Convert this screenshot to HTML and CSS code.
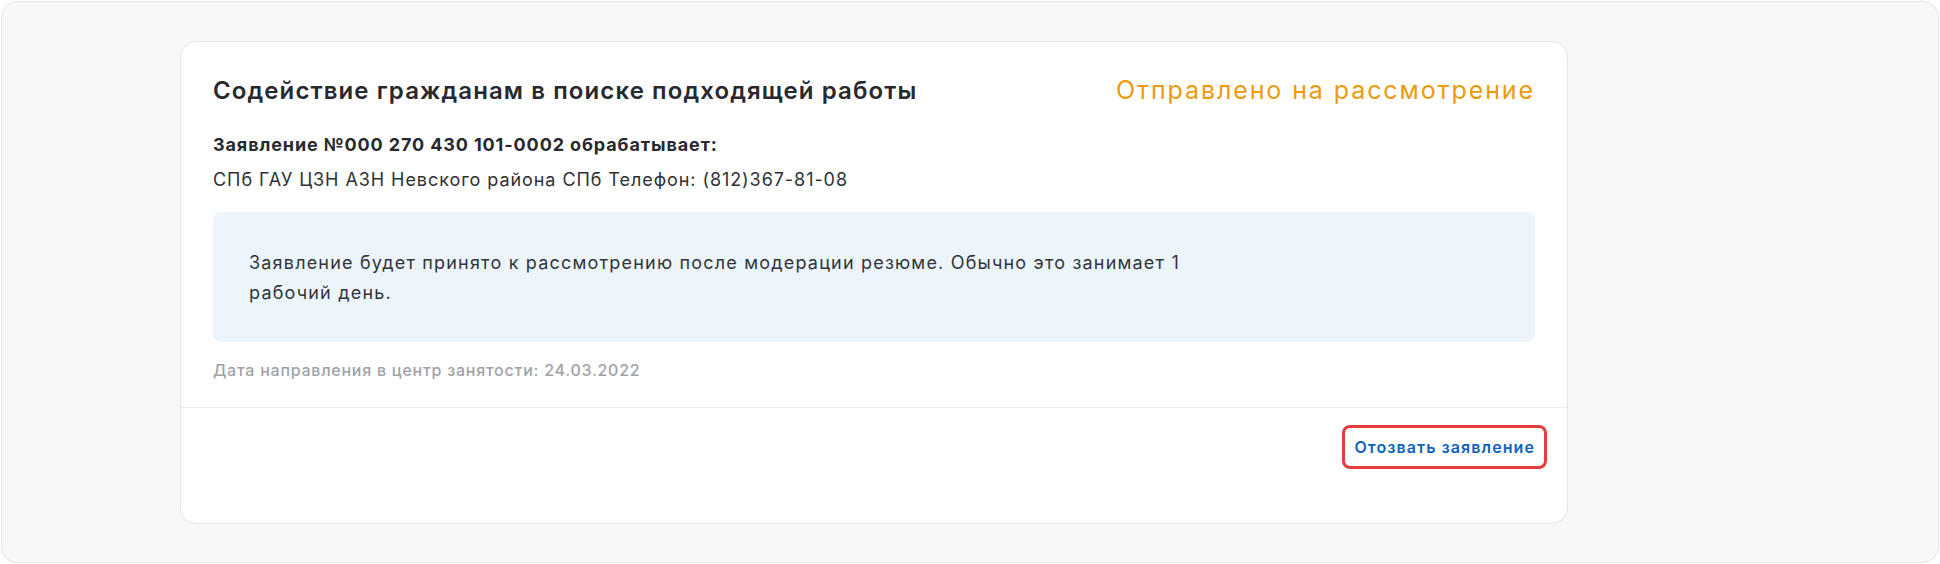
FILE: index.html
```html
<!DOCTYPE html>
<html lang="ru">
<head>
<meta charset="utf-8">
<title>Заявление</title>
<link rel="stylesheet" href="styles.css">
</head>
<body>
<div class="page">
  <article class="card">
    <div class="card-body">
      <div class="card-head">
        <h2 class="card-title">Содействие гражданам в поиске подходящей работы</h2>
        <span class="card-status">Отправлено на рассмотрение</span>
      </div>
      <p class="app-number">Заявление №000 270 430 101-0002 обрабатывает:</p>
      <p class="app-org">СПб ГАУ ЦЗН АЗН Невского района СПб Телефон: (812)367-81-08</p>
      <div class="notice">
        <p class="notice-text">Заявление будет принято к рассмотрению после модерации резюме. Обычно это занимает 1 рабочий день.</p>
      </div>
      <p class="app-date">Дата направления в центр занятости: 24.03.2022</p>
    </div>
    <div class="card-footer">
      <a class="withdraw-link" href="#">Отозвать заявление</a>
    </div>
  </article>
</div>
</body>
</html>
```
FILE: styles.css
```css
html, body {
  margin: 0;
  padding: 0;
  background: #ffffff;
}

body {
  font-family: Inter, "Noto Sans", "Liberation Sans", sans-serif;
  color: #2a2c31;
}

.page {
  margin: 1px;
  height: 562px;
  box-sizing: border-box;
  border: 1px solid #e6e6e6;
  border-radius: 16px;
  background: #f8f8f8;
  padding: 39px 0 0 178px;
}

.card {
  width: 1388px;
  box-sizing: border-box;
  background: #ffffff;
  border: 1px solid #e3e3e3;
  border-radius: 16px;
}

.card-body {
  padding: 32px 32px 25px;
}

.card-head {
  display: flex;
  justify-content: space-between;
  align-items: baseline;
}

.card-title {
  margin: 0;
  font-size: 24px;
  line-height: 32px;
  font-weight: 600;
  letter-spacing: 1.1px;
  color: #27292e;
}

.card-status {
  font-size: 25px;
  line-height: 32px;
  font-weight: 400;
  letter-spacing: 1.9px;
  color: #ee9a0b;
}

.app-number {
  margin: 26px 0 0;
  font-size: 18px;
  line-height: 24px;
  font-weight: 700;
  letter-spacing: 0.89px;
  color: #27292e;
}

.app-org {
  margin: 11px 0 0;
  font-size: 18px;
  line-height: 24px;
  font-weight: 400;
  letter-spacing: 0.93px;
  color: #2f3136;
}

.notice {
  margin-top: 20px;
  padding: 36px 36px 34px;
  background: #ecf4fc;
  border-radius: 8px;
}

.notice-text {
  margin: 0;
  max-width: 990px;
  font-size: 18px;
  line-height: 30px;
  letter-spacing: 1.19px;
  color: #323439;
}

.app-date {
  margin: 16px 0 0;
  font-size: 16px;
  line-height: 24px;
  font-weight: 500;
  letter-spacing: 0.75px;
  color: #a0a2a7;
}

.card-footer {
  border-top: 1px solid #ececec;
  padding: 29px 32px 66px;
  display: flex;
  justify-content: flex-end;
}

.withdraw-link {
  display: inline-block;
  margin: -12px;
  padding: 9px;
  border: 3px solid #e53d3d;
  border-radius: 8px;
  font-size: 16px;
  line-height: 20px;
  font-weight: 600;
  letter-spacing: 1.08px;
  color: #0f62bf;
  text-decoration: none;
}
```
